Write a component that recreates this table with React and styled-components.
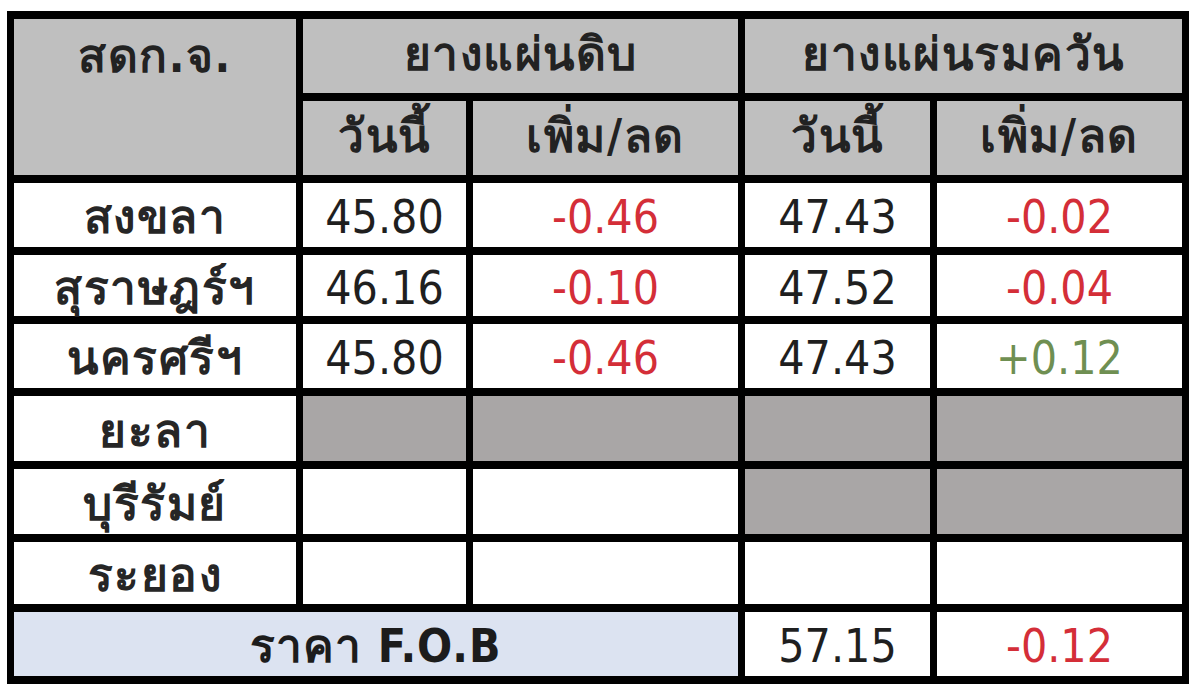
import styled, { createGlobalStyle } from "styled-components";

const GlobalStyle = createGlobalStyle`
  html, body {
    margin: 0;
    padding: 0;
    background: #ffffff;
  }
`;

const Page = styled.div`
  padding: 11px 0 0 7px;
  font-family: "DejaVu Sans Condensed", "DejaVu Sans", Tahoma, sans-serif;
  color: #1f1f1f;
`;

const PriceTable = styled.table`
  table-layout: fixed;
  width: 1182px;
  border-collapse: separate;
  border-spacing: 7px 8px;
  background: #000;
`;

const HeadCell = styled.th`
  background: #bfbfbf;
  font-size: 46px;
  line-height: 1;
  font-weight: 700;
  letter-spacing: 1.5px;
  text-align: center;
  vertical-align: ${(p) => (p.$top ? "top" : "middle")};
  padding: ${(p) => (p.$top ? "14px 0 0" : "0 0 4px")};
  color: #222;
`;

const HeadRow = styled.tr`
  height: 74px;
`;

const BodyRow = styled.tr`
  height: ${(p) => p.$h || 64}px;
`;

const Label = styled.td`
  background: #fff;
  font-size: 46px;
  line-height: 1;
  font-weight: 700;
  letter-spacing: 1.5px;
  text-align: center;
  color: #262626;
  padding: 4px 0 0;
`;

const Cell = styled.td`
  background: ${(p) => (p.$shade ? "#a9a6a6" : "#fff")};
  font-size: 46px;
  line-height: 1;
  padding: 4px 0 0;
  text-align: center;
  color: ${(p) =>
    p.$tone === "down" ? "#d42e38" : p.$tone === "up" ? "#6f8f52" : "#1f1f1f"};
`;

const FobCell = styled.td`
  background: #dce3f1;
  font-size: 46px;
  line-height: 1;
  font-weight: 700;
  letter-spacing: 1px;
  text-align: center;
  color: #1c1c1c;
  padding: 4px 0 0;
`;

const rows = [
  { name: "สงขลา", h: 64, raw: ["45.80", "-0.46"], smoked: ["47.43", "-0.02"] },
  { name: "สุราษฎร์ฯ", h: 61, raw: ["46.16", "-0.10"], smoked: ["47.52", "-0.04"] },
  { name: "นครศรีฯ", h: 64, raw: ["45.80", "-0.46"], smoked: ["47.43", "+0.12"] },
  { name: "ยะลา", h: 65, shadeRaw: true, shadeSmoked: true },
  { name: "บุรีรัมย์", h: 65, shadeSmoked: true },
  { name: "ระยอง", h: 62 },
];

const tone = (v) => (!v ? null : v.startsWith("-") ? "down" : "up");

export default function App() {
  return (
    <>
      <GlobalStyle />
      <Page>
        <PriceTable>
          <colgroup>
            <col style={{ width: 282 }} />
            <col style={{ width: 163 }} />
            <col style={{ width: 265 }} />
            <col style={{ width: 185 }} />
            <col style={{ width: 245 }} />
          </colgroup>
          <thead>
            <HeadRow>
              <HeadCell rowSpan={2} $top>
                สดก.จ.
              </HeadCell>
              <HeadCell colSpan={2}>ยางแผ่นดิบ</HeadCell>
              <HeadCell colSpan={2}>ยางแผ่นรมควัน</HeadCell>
            </HeadRow>
            <HeadRow>
              <HeadCell>วันนี้</HeadCell>
              <HeadCell>เพิ่ม/ลด</HeadCell>
              <HeadCell>วันนี้</HeadCell>
              <HeadCell>เพิ่ม/ลด</HeadCell>
            </HeadRow>
          </thead>
          <tbody>
            {rows.map((r) => (
              <BodyRow key={r.name} $h={r.h}>
                <Label>{r.name}</Label>
                <Cell $shade={r.shadeRaw}>{r.raw?.[0]}</Cell>
                <Cell $shade={r.shadeRaw} $tone={tone(r.raw?.[1])}>
                  {r.raw?.[1]}
                </Cell>
                <Cell $shade={r.shadeSmoked}>{r.smoked?.[0]}</Cell>
                <Cell $shade={r.shadeSmoked} $tone={tone(r.smoked?.[1])}>
                  {r.smoked?.[1]}
                </Cell>
              </BodyRow>
            ))}
            <BodyRow $h={64}>
              <FobCell colSpan={3}>ราคา F.O.B</FobCell>
              <Cell>57.15</Cell>
              <Cell $tone="down">-0.12</Cell>
            </BodyRow>
          </tbody>
        </PriceTable>
      </Page>
    </>
  );
}
